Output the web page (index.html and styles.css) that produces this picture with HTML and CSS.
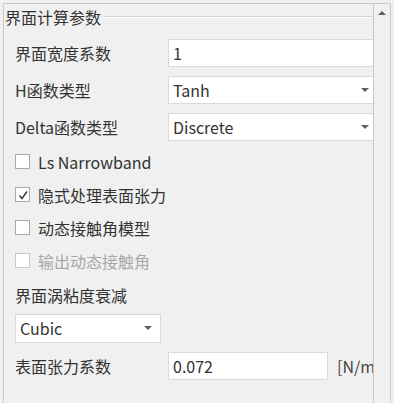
FILE: index.html
```html
<!DOCTYPE html>
<html lang="zh">
<head>
    <meta charset="UTF-8">
    <title>界面计算参数</title>
    <link rel="stylesheet" href="styles.css">
</head>
<body>
    <div class="frame">
        <div class="viewport">
            <div class="group-title">
                <span>界面计算参数</span>
                <div class="group-line"></div>
            </div>

            <div class="form">
                <div class="row field-row first">
                    <label class="label">界面宽度系数</label>
                    <div class="input wide">1</div>
                </div>
                <div class="row field-row">
                    <label class="label">H函数类型</label>
                    <div class="input wide combo">Tanh<span class="arrow"></span></div>
                </div>
                <div class="row field-row last">
                    <label class="label">Delta函数类型</label>
                    <div class="input wide combo">Discrete<span class="arrow"></span></div>
                </div>

                <div class="row check-row">
                    <span class="box"></span>
                    <span>Ls Narrowband</span>
                </div>
                <div class="row check-row">
                    <span class="box">
                        <svg width="12" height="12" viewBox="0 0 12 12"><polyline points="2.5,6.5 5,9.5 10,2.5" fill="none" stroke="#333" stroke-width="1.4"/></svg>
                    </span>
                    <span>隐式处理表面张力</span>
                </div>
                <div class="row check-row">
                    <span class="box"></span>
                    <span>动态接触角模型</span>
                </div>
                <div class="row check-row disabled">
                    <span class="box"></span>
                    <span>输出动态接触角</span>
                </div>

                <div class="row sub-label">界面涡粘度衰减</div>
                <div class="input small combo">Cubic<span class="arrow"></span></div>

                <div class="row field-row tension">
                    <label class="label">表面张力系数</label>
                    <div class="input mid">0.072</div>
                    <span class="unit">[N/m]</span>
                </div>
            </div>
        </div>
        <div class="scrollbar">
            <span class="up"></span>
        </div>
    </div>
</body>
</html>
```

FILE: styles.css
```css
body {
    margin: 0;
    background-color: #f0f0f0;
    font-family: "Noto Sans CJK SC", "Noto Sans", sans-serif;
    font-size: 16px;
    color: #333;
}
.frame {
    display: flex;
    margin: 3px 0 0 3px;
    width: 388px;
    height: 400px;
    border-top: 1px solid #c9c9c9;
    border-left: 1px solid #c9c9c9;
    box-sizing: border-box;
}
.viewport {
    width: 369px;
    overflow: hidden;
}
.group-title {
    display: flex;
    align-items: center;
    height: 26px;
    padding-left: 1px;
}
.group-title span {
    line-height: 26px;
    white-space: nowrap;
}
.group-line {
    flex: 1;
    margin-left: 3px;
    margin-top: -1px;
    border-top: 1px solid #d4d4d4;
    border-bottom: 1px solid #fff;
}
.form {
    padding-left: 11px;
}
.row {
    display: flex;
    align-items: center;
    white-space: nowrap;
}
.field-row {
    height: 28px;
    margin-bottom: 9px;
}
.field-row.first {
    margin-top: 9px;
}
.field-row.last {
    margin-bottom: 4px;
}
.label {
    width: 153px;
    flex: none;
}
.input {
    position: relative;
    box-sizing: border-box;
    height: 28px;
    line-height: 26px;
    padding-left: 4px;
    background-color: #fff;
    border: 1px solid #dadada;
    flex: none;
}
.input.wide {
    width: 212px;
}
.input.mid {
    width: 160px;
}
.input.small {
    width: 146px;
    height: 29px;
    margin-top: 1px;
    margin-bottom: 9px;
}
.arrow {
    position: absolute;
    right: 8px;
    top: 11px;
    border-left: 4px solid transparent;
    border-right: 4px solid transparent;
    border-top: 4px solid #606060;
}
.input.wide .arrow {
    right: 10px;
}
.check-row {
    height: 33px;
}
.box {
    display: inline-flex;
    align-items: center;
    justify-content: center;
    box-sizing: border-box;
    width: 15px;
    height: 15px;
    margin-right: 8px;
    background-color: #fff;
    border: 1px solid #a9a9a9;
}
.disabled {
    color: #a8a8a8;
}
.disabled .box {
    border-color: #c8c8c8;
}
.sub-label {
    height: 36px;
}
.unit {
    margin-left: 9px;
    color: #444;
}
.scrollbar {
    position: relative;
    width: 18px;
    box-sizing: border-box;
    border-left: 1px solid #c9c9c9;
    border-right: 1px solid #c9c9c9;
}
.up {
    position: absolute;
    left: 4px;
    top: 7px;
    border-left: 4px solid transparent;
    border-right: 4px solid transparent;
    border-bottom: 4px solid #606060;
}
```
